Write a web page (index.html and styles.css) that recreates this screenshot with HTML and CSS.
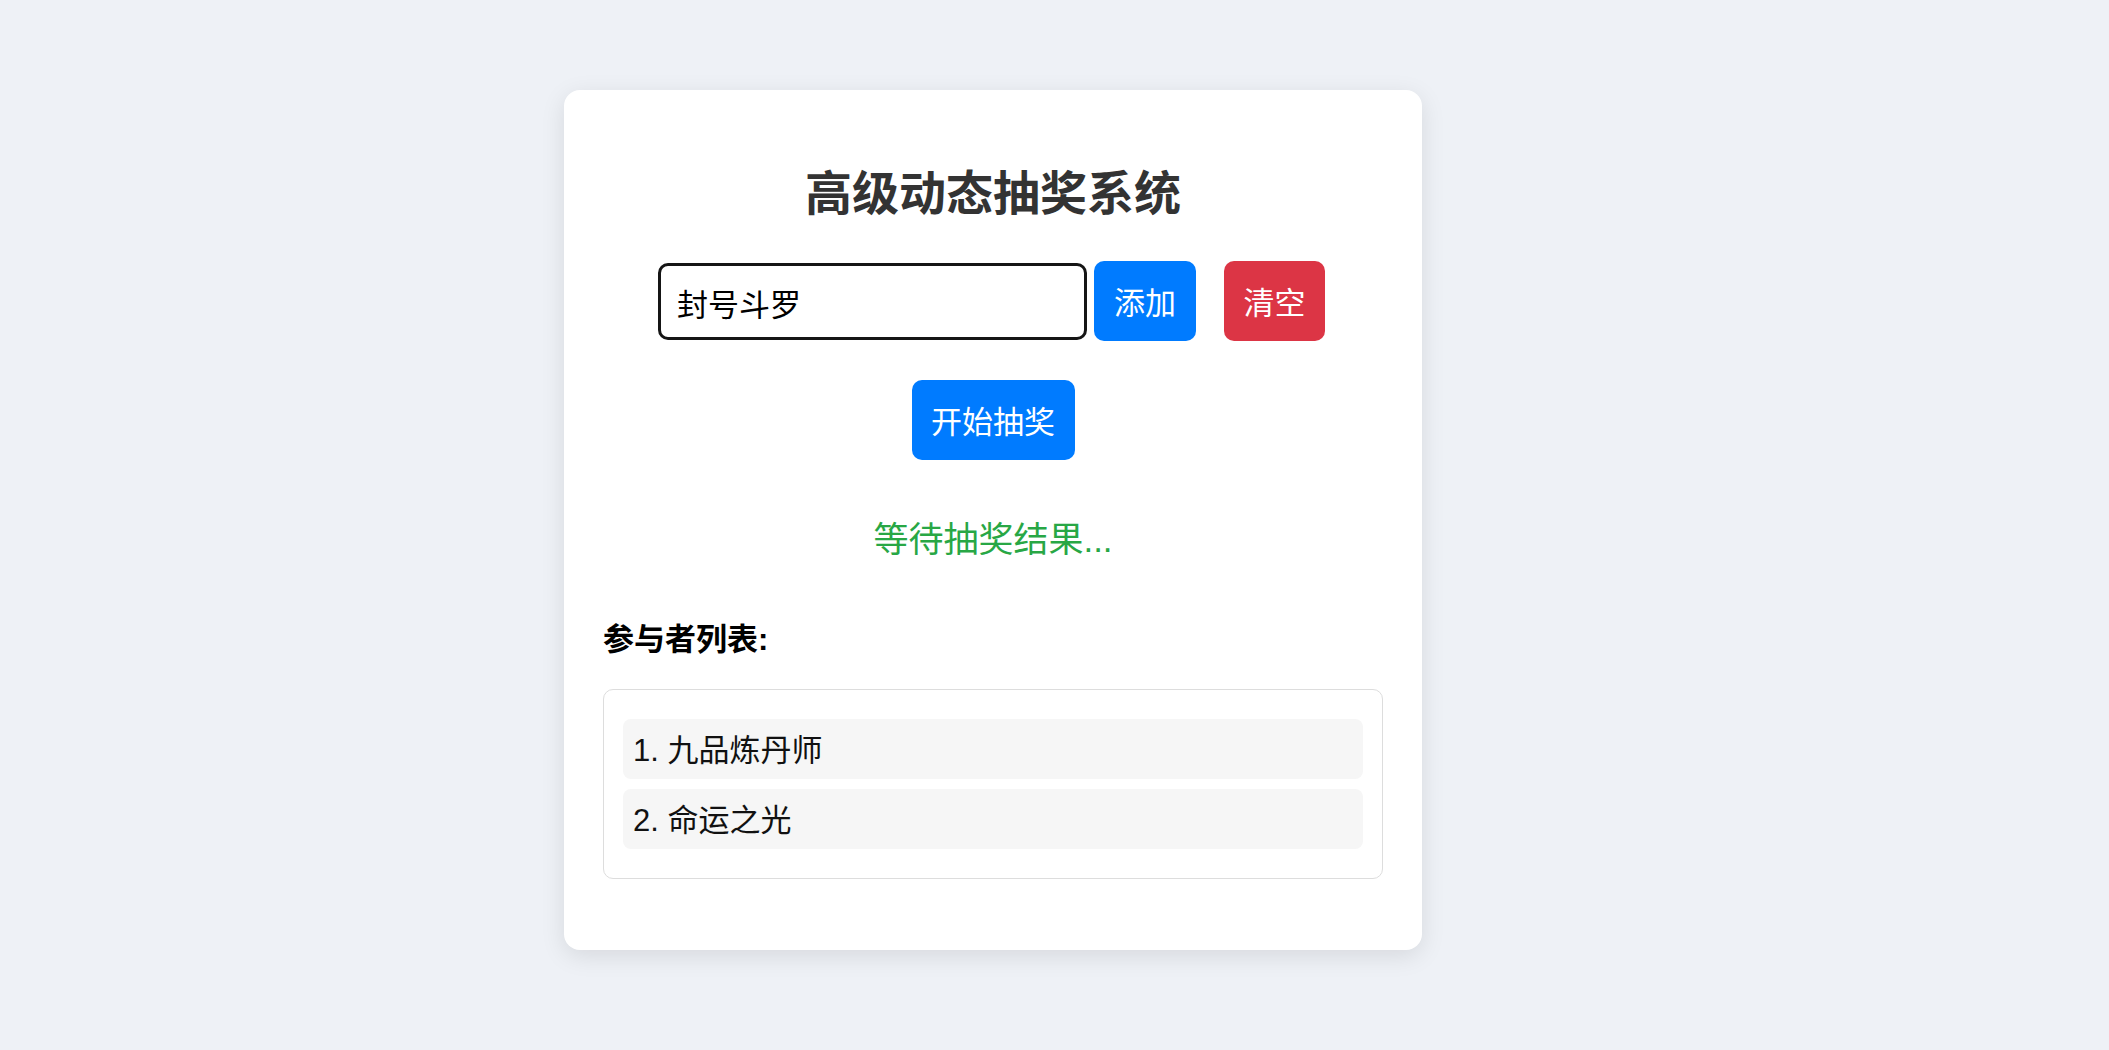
FILE: index.html
```html
<!DOCTYPE html>
<html lang="zh-CN">
<head>
<meta charset="utf-8">
<title>高级动态抽奖系统</title>
<link rel="stylesheet" href="styles.css">
</head>
<body>
<div class="card">
  <h1 class="title">高级动态抽奖系统</h1>
  <div class="input-row">
    <input class="name-input" type="text" value="封号斗罗">
    <button class="btn btn-blue btn-add">添加</button>
    <button class="btn btn-red btn-clear">清空</button>
  </div>
  <div class="start-row">
    <button class="btn btn-blue">开始抽奖</button>
  </div>
  <div class="result">等待抽奖结果...</div>
  <h3 class="list-title">参与者列表:</h3>
  <div class="list">
    <div class="item">1. 九品炼丹师</div>
    <div class="item">2. 命运之光</div>
  </div>
</div>
</body>
</html>
```

FILE: styles.css
```css
html, body {
  margin: 0;
  padding: 0;
}
body {
  background: #eef1f6;
  font-family: "Liberation Sans", "Noto Sans CJK SC", sans-serif;
  padding-top: 90px;
  height: 1050px;
  box-sizing: border-box;
}
.card {
  box-sizing: border-box;
  width: 858px;
  height: 860px;
  margin-left: 564px;
  background: #fff;
  border-radius: 16px;
  box-shadow: 0 6px 24px rgba(0, 0, 0, 0.10);
  padding: 40px 39px 70px;
}
.title {
  margin: 34px 0 0;
  font-size: 47px;
  line-height: 60px;
  font-weight: 700;
  color: #333;
  text-align: center;
}
.input-row {
  margin-top: 37px;
  padding-right: 3px;
  display: flex;
  justify-content: center;
  align-items: center;
  height: 80px;
}
.name-input {
  box-sizing: border-box;
  width: 429px;
  height: 77px;
  border: 3px solid #151515;
  border-radius: 10px;
  padding: 3px 16px 0;
  font-family: "Liberation Sans", "Noto Sans CJK SC", sans-serif;
  font-size: 31px;
  color: #000;
  outline: none;
  background: #fff;
}
.btn {
  border: none;
  border-radius: 10px;
  color: #fff;
  font-family: "Liberation Sans", "Noto Sans CJK SC", sans-serif;
  font-size: 31px;
  line-height: 41px;
  padding: 22px 19.5px 17px;
  cursor: pointer;
}
.btn-blue { background: #007bff; }
.btn-red { background: #dc3545; }
.btn-add { margin-left: 7px; width: 102px; }
.btn-clear { margin-left: 28px; width: 101px; }
.start-row {
  margin-top: 39px;
  display: flex;
  justify-content: center;
}
.start-row .btn { width: 163px; }
.result {
  margin-top: 56px;
  text-align: center;
  color: #28a745;
  font-size: 35px;
  line-height: 48px;
}
.list-title {
  margin: 56px 0 0;
  font-size: 31px;
  line-height: 40px;
  font-weight: 700;
  color: #000;
}
.list {
  margin-top: 29px;
  border: 1px solid #dddddd;
  border-radius: 10px;
  padding: 29px 19px;
  display: flex;
  flex-direction: column;
  gap: 10px;
}
.item {
  box-sizing: border-box;
  background: #f6f6f6;
  border-radius: 8px;
  height: 60px;
  line-height: 57px;
  padding: 3px 10px 0;
  font-size: 31px;
  color: #111;
}
```
